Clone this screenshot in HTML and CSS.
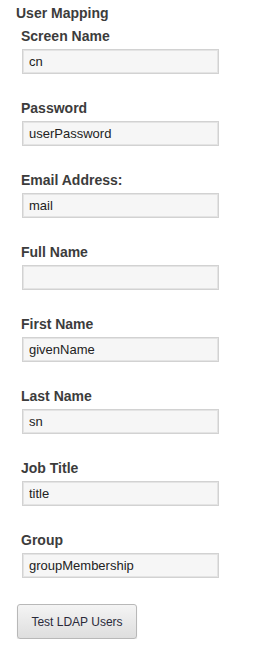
FILE: index.html
```html
<!DOCTYPE html>
<html>
<head>
<meta name="viewport" content="width=device-width, initial-scale=1.0">
  <title>User Mapping</title>
  <link rel="stylesheet" href="styles.css">
</head>
<body>
  <div class="mapping">
    <h3 class="title">User Mapping</h3>
    <div class="fields">
      <div class="field">
        <label>Screen Name</label>
        <input type="text" value="cn">
      </div>
      <div class="field">
        <label>Password</label>
        <input type="text" value="userPassword">
      </div>
      <div class="field">
        <label>Email Address:</label>
        <input type="text" value="mail">
      </div>
      <div class="field">
        <label>Full Name</label>
        <input type="text" value="">
      </div>
      <div class="field">
        <label>First Name</label>
        <input type="text" value="givenName">
      </div>
      <div class="field">
        <label>Last Name</label>
        <input type="text" value="sn">
      </div>
      <div class="field">
        <label>Job Title</label>
        <input type="text" value="title">
      </div>
      <div class="field">
        <label>Group</label>
        <input type="text" value="groupMembership">
      </div>
    </div>
    <button class="test-btn">Test LDAP Users</button>
  </div>
</body>
</html>
```

FILE: styles.css
```css
body {
  margin: 0;
  font-family: "Liberation Sans", Arial, sans-serif;
  background: #fff;
}
.mapping {
  padding-top: 5px;
}
.title {
  margin: 0 0 7px 16px;
  font-size: 14px;
  line-height: 16px;
  font-weight: bold;
  color: #3c3c3c;
}
.fields {
  padding-left: 21px;
}
.field {
  display: flex;
  flex-direction: column;
  align-items: flex-start;
  margin-bottom: 26px;
}
.field label {
  font-size: 14px;
  line-height: 16px;
  font-weight: bold;
  color: #3c3c3c;
  margin-bottom: 5px;
}
.field input {
  box-sizing: border-box;
  width: 197px;
  height: 25px;
  margin: 0 0 0 1px;
  padding: 0 6px;
  font-family: "Liberation Sans", Arial, sans-serif;
  font-size: 13px;
  color: #222;
  background: #f6f6f6;
  border: 1px solid #d2d2d2;
  box-shadow: inset 0 0 0 1px #e4e4e4;
  outline: none;
}
.test-btn {
  box-sizing: border-box;
  margin-left: 17px;
  width: 120px;
  height: 35px;
  font-family: "Liberation Sans", Arial, sans-serif;
  font-size: 12px;
  color: #2a2a3a;
  background: linear-gradient(#f4f4f4, #dedede);
  border: 1px solid #b8b8b8;
  border-radius: 3px;
  box-shadow: 0 1px 1px rgba(0, 0, 0, 0.15);
}
```
